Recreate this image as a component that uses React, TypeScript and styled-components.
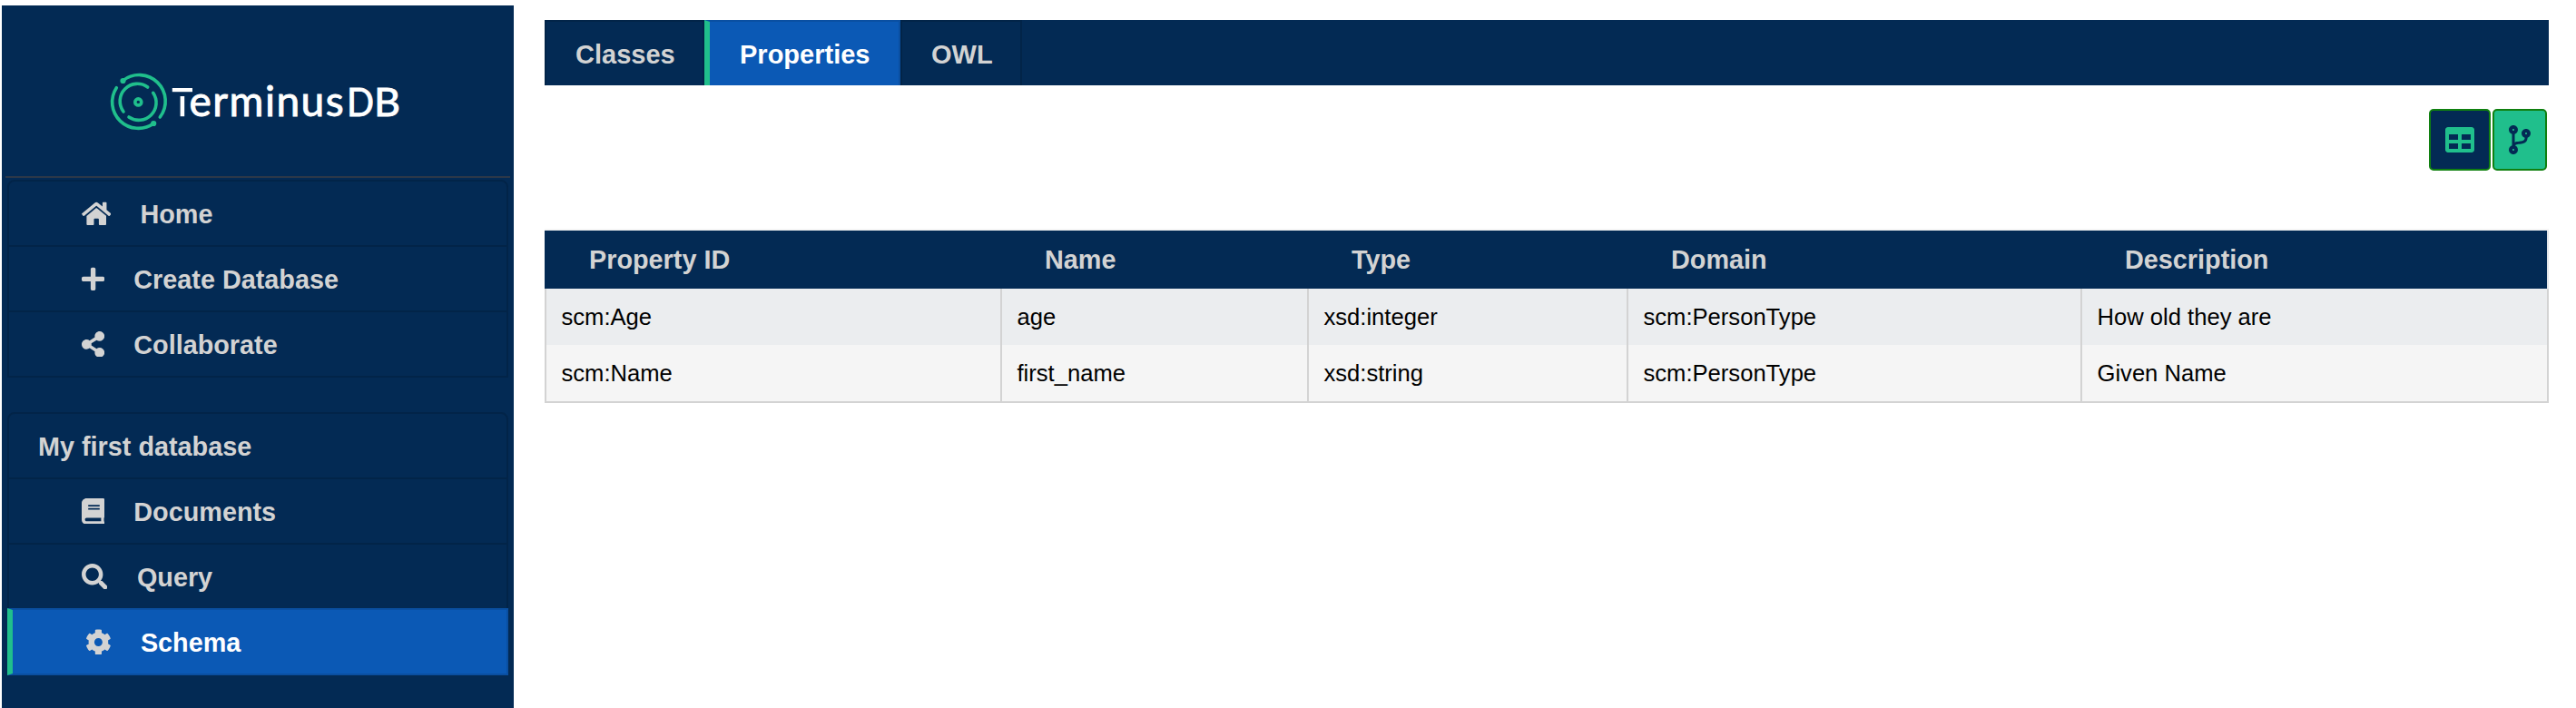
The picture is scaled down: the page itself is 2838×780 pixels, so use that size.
import React from 'react';
import styled, { createGlobalStyle, css } from 'styled-components';
import type { IconType } from 'react-icons';
import { FaHome, FaPlus, FaShareAlt, FaBook, FaSearch, FaCog, FaTable, FaCodeBranch } from 'react-icons/fa';

const navy = '#032a54';
const blue = '#0b59b5';
const green = '#20bf8c';
const silver = '#d3d3d3';

const GlobalStyle = createGlobalStyle`
  *, *::before, *::after { box-sizing: border-box; }
  body {
    margin: 0;
    background: #fff;
    font-family: 'Liberation Sans', Arial, sans-serif;
  }
`;

const Page = styled.div`
  display: flex;
  height: 780px;
  padding: 6px 30px 0 2px;
  overflow: hidden;
`;

const Sidebar = styled.aside`
  width: 564px;
  flex: none;
  padding: 0 4px;
  background: ${navy};
`;

const Brand = styled.div`
  display: flex;
  height: 190px;
  padding: 74px 0 0 114px;
  border-bottom: 2px solid #2c3848;
`;

const Logo = styled.svg`
  display: block;
  width: 330px;
  height: 66px;
`;

const Menu = styled.ul`
  list-style: none;
  margin: 2px 2px 0;
  padding: 0;

  & + & {
    margin-top: 38px;
  }
`;

const MenuItem = styled.li<{ $active?: boolean; $heading?: boolean }>`
  display: flex;
  align-items: center;
  gap: 32.6px;
  height: 74px;
  padding-left: ${(p) => (p.$heading ? 32 : 79.5)}px;
  border: 2px solid #022448;
  color: ${silver};
  font-size: 28.8px;
  font-weight: 700;
  line-height: 34px;

  &:first-child {
    border-radius: 8px 8px 0 0;
  }

  & + & {
    margin-top: -2px;
  }

  ${(p) =>
    p.$active &&
    css`
      position: relative;
      background: ${blue};
      border-color: #0a4fa1;
      border-left: 6px solid ${green};
    `}
`;

const Glyph = styled.span<{ $width: number; $size?: number }>`
  display: flex;
  color: inherit;

  svg {
    display: block;
    width: ${(p) => p.$width}px;
    height: ${(p) => p.$size ?? 28.8}px;
  }
`;

const MenuGlyph = styled(Glyph)`
  color: ${silver};
`;

const Label = styled.span<{ $active?: boolean }>`
  padding-top: 2px;
  color: ${(p) => (p.$active ? '#fff' : 'inherit')};
`;

const Content = styled.main`
  flex: 1;
  padding: 16px 0 0 34px;
`;

const Tabs = styled.nav`
  display: flex;
  height: 72px;
  background: ${navy};
`;

const Tab = styled.button<{ $active?: boolean; $width: number }>`
  width: ${(p) => p.$width}px;
  padding: 2px 0 0 32px;
  border: 2px solid #022448;
  border-bottom: 0;
  background: ${navy};
  color: ${silver};
  font: 700 29px/68px 'Liberation Sans', Arial, sans-serif;
  text-align: left;

  ${(p) =>
    p.$active &&
    css`
      padding-left: 33px;
      background: ${blue};
      border-color: #0a4fa1;
      border-left: 6px solid ${green};
      color: #fff;
    `}
`;

const ViewSwitch = styled.div`
  display: flex;
  justify-content: flex-end;
  gap: 2px;
  padding: 26px 2px 64px 0;
`;

const ViewButton = styled.button<{ $selected?: boolean }>`
  padding: 16px;
  border: 2px solid #108010;
  border-radius: 5px;
  background: ${(p) => (p.$selected ? green : navy)};
  color: ${(p) => (p.$selected ? navy : green)};
`;

const Table = styled.div`
  border-top: 2px solid #f5f5f5;
`;

const Row = styled.div`
  display: grid;
  grid-template-columns: 502px 338px 352px 500px 1fr;
`;

const HeadRow = styled(Row)`
  height: 64px;
  background: ${navy};
  border-right: 2px solid #e4e6e8;
`;

const HeadCell = styled.div`
  padding-left: 49px;
  color: ${silver};
  font-size: 28.8px;
  font-weight: 700;
  line-height: 64px;
`;

const BodyRow = styled(Row)<{ $shaded?: boolean }>`
  background: ${(p) => (p.$shaded ? '#ebedef' : '#f5f5f5')};
  border-right: 2px solid ${silver};

  &:last-child {
    border-bottom: 2px solid ${silver};
  }
`;

const Cell = styled.div`
  height: 62px;
  padding-left: 16.5px;
  border-left: 2px solid ${silver};
  color: #000;
  font-size: 25.6px;
  line-height: 62px;
`;

interface Entry {
  icon: IconType;
  width: number;
  label: string;
  active?: boolean;
}

const mainEntries: Entry[] = [
  { icon: FaHome, width: 32.4, label: 'Home' },
  { icon: FaPlus, width: 25.2, label: 'Create Database' },
  { icon: FaShareAlt, width: 25.2, label: 'Collaborate' },
];

const databaseEntries: Entry[] = [
  { icon: FaBook, width: 25.2, label: 'Documents' },
  { icon: FaSearch, width: 28.8, label: 'Query' },
  { icon: FaCog, width: 28.8, label: 'Schema', active: true },
];

const columns = ['Property ID', 'Name', 'Type', 'Domain', 'Description'];

const properties = [
  ['scm:Age', 'age', 'xsd:integer', 'scm:PersonType', 'How old they are'],
  ['scm:Name', 'first_name', 'xsd:string', 'scm:PersonType', 'Given Name'],
];

const TerminusLogo = () => (
  <Logo viewBox="120 80 330 66" role="img" aria-label="TerminusDB">
    <g fill="none" stroke={green} strokeWidth="3.6" strokeLinecap="round">
      <path d="M135.4 88.8 A28.9 28.9 0 0 1 176.3 129" />
      <path d="M128.3 96.7 A28.9 28.9 0 0 0 169.3 136" />
      <path d="M162.7 96 A19.2 19.2 0 0 0 136 123" />
      <path d="M168.7 102.3 A19.2 19.2 0 0 1 142 129" />
      <circle cx="152.3" cy="112.4" r="3.5" />
    </g>
    <g fill={green}>
      <circle cx="135.5" cy="89" r="3.1" />
      <circle cx="169.2" cy="136" r="3.1" />
    </g>
    <rect x="189.8" y="97" width="22.2" height="4.2" fill="#fff" />
    <rect x="198.6" y="106" width="4.6" height="22.2" fill="#fff" />
    <g fill="#fff" stroke="#fff" strokeWidth="0.9" fontFamily="Lato, sans-serif">
      <text x="208.6" y="128" fontSize="46" textLength="170" lengthAdjust="spacing">erminus</text>
      <text fontSize="43" x="382" y="127.8" textLength="30" lengthAdjust="spacingAndGlyphs">D</text>
      <text fontSize="43" x="412" y="127.8" textLength="29" lengthAdjust="spacingAndGlyphs">B</text>
    </g>
  </Logo>
);

const MenuEntry = ({ icon: Icon, width, label, active }: Entry) => (
  <MenuItem $active={active}>
    <MenuGlyph $width={width}>
      <Icon />
    </MenuGlyph>
    <Label $active={active}>{label}</Label>
  </MenuItem>
);

export default function App() {
  return (
    <Page>
      <GlobalStyle />
      <Sidebar>
        <Brand>
          <TerminusLogo />
        </Brand>
        <Menu>
          {mainEntries.map((entry) => (
            <MenuEntry key={entry.label} {...entry} />
          ))}
        </Menu>
        <Menu>
          <MenuItem $heading>
            <Label>My first database</Label>
          </MenuItem>
          {databaseEntries.map((entry) => (
            <MenuEntry key={entry.label} {...entry} />
          ))}
        </Menu>
      </Sidebar>
      <Content>
        <Tabs>
          <Tab $width={176}>Classes</Tab>
          <Tab $width={216} $active>
            Properties
          </Tab>
          <Tab $width={134}>OWL</Tab>
        </Tabs>
        <ViewSwitch>
          <ViewButton aria-label="Table view">
            <Glyph $width={32} $size={32}>
              <FaTable />
            </Glyph>
          </ViewButton>
          <ViewButton $selected aria-label="Graph view">
            <Glyph $width={24} $size={32}>
              <FaCodeBranch />
            </Glyph>
          </ViewButton>
        </ViewSwitch>
        <Table>
          <HeadRow>
            {columns.map((name) => (
              <HeadCell key={name}>{name}</HeadCell>
            ))}
          </HeadRow>
          {properties.map((values, i) => (
            <BodyRow key={values[0]} $shaded={i % 2 === 0}>
              {values.map((value, j) => (
                <Cell key={j}>{value}</Cell>
              ))}
            </BodyRow>
          ))}
        </Table>
      </Content>
    </Page>
  );
}
